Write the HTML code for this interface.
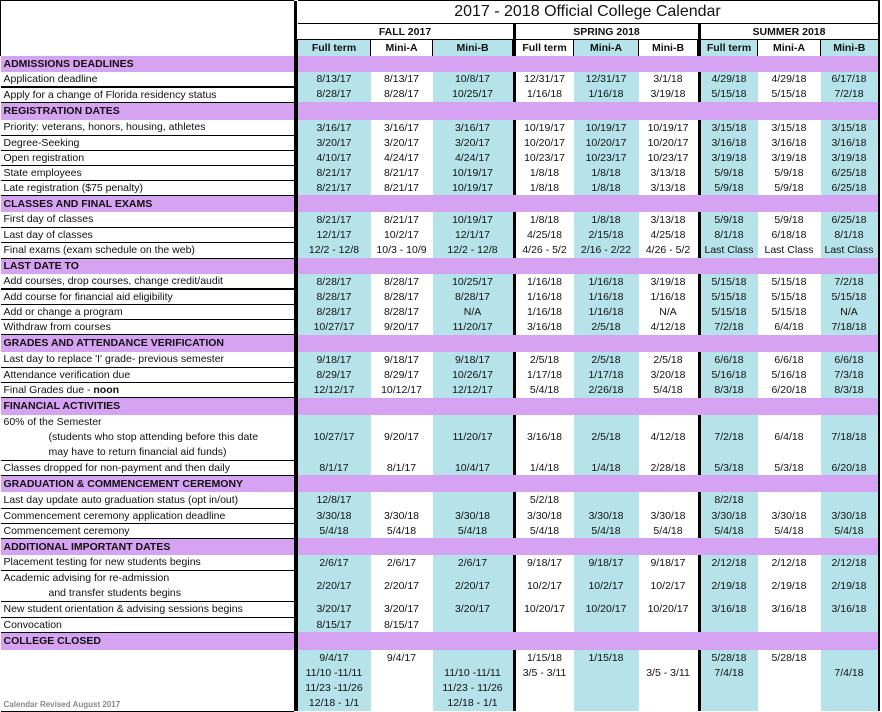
<!DOCTYPE html>
<html><head><meta charset="utf-8"><style>
body{margin:0;background:#fff;width:882px;height:707px;overflow:hidden}
table{border-collapse:collapse;table-layout:fixed;font-family:"Liberation Sans",sans-serif;font-size:10.5px;color:#111;border-right:2px solid #000}
td{padding:0;text-align:center;white-space:nowrap;overflow:hidden;line-height:14px}
.l{text-align:left;padding-left:3px;border-bottom:1px solid #000}
.d{background:#000}
.p{background:#d6a2f2;font-weight:bold;border-bottom:none}
.b{background:#b6e2ea}
.h td{font-weight:bold}
.sub td{border-left:1px solid #000;border-top:1px solid #000;font-weight:bold}
.ind{padding-left:45px}
</style></head><body>
<table>
<colgroup><col style="width:293px"><col style="width:4px"><col style="width:73px"><col style="width:62px"><col style="width:80px"><col style="width:3px"><col style="width:58px"><col style="width:65px"><col style="width:59px"><col style="width:3px"><col style="width:57px"><col style="width:63px"><col style="width:58px"></colgroup>
<tr style="height:23px"><td rowspan="3" style="border-top:1px solid #000;border-left:1px solid #000"></td><td rowspan="3" class="d"></td><td colspan="11" style="font-size:16px;border-top:1px solid #000;border-bottom:1px solid #000;line-height:20px">2017 - 2018 Official College Calendar</td></tr>
<tr class="h" style="height:16px"><td colspan="3">FALL 2017</td><td class="d"></td><td colspan="3">SPRING 2018</td><td class="d"></td><td colspan="3">SUMMER 2018</td></tr>
<tr class="sub" style="height:16px"><td class="b">Full term</td><td>Mini-A</td><td class="b">Mini-B</td><td class="d"></td><td>Full term</td><td class="b">Mini-A</td><td>Mini-B</td><td class="d"></td><td class="b">Full term</td><td>Mini-A</td><td class="b">Mini-B</td></tr>

<tr style="height:16px"><td class="l p">ADMISSIONS DEADLINES</td><td class="d"></td><td colspan="11" class="p"></td></tr>
<tr style="height:15px"><td class="l" style="border-bottom:2px solid #000">Application deadline</td><td class="d"></td><td class="b">8/13/17</td><td>8/13/17</td><td class="b">10/8/17</td><td class="d"></td><td>12/31/17</td><td class="b">12/31/17</td><td>3/1/18</td><td class="d"></td><td class="b">4/29/18</td><td>4/29/18</td><td class="b">6/17/18</td></tr>
<tr style="height:15px"><td class="l">Apply for a change of Florida residency status</td><td class="d"></td><td class="b">8/28/17</td><td>8/28/17</td><td class="b">10/25/17</td><td class="d"></td><td>1/16/18</td><td class="b">1/16/18</td><td>3/19/18</td><td class="d"></td><td class="b">5/15/18</td><td>5/15/18</td><td class="b">7/2/18</td></tr>

<tr style="height:18px"><td class="l p">REGISTRATION DATES</td><td class="d"></td><td colspan="11" class="p"></td></tr>
<tr style="height:15px"><td class="l">Priority: veterans, honors, housing, athletes</td><td class="d"></td><td class="b">3/16/17</td><td>3/16/17</td><td class="b">3/16/17</td><td class="d"></td><td>10/19/17</td><td class="b">10/19/17</td><td>10/19/17</td><td class="d"></td><td class="b">3/15/18</td><td>3/15/18</td><td class="b">3/15/18</td></tr>
<tr style="height:15px"><td class="l">Degree-Seeking</td><td class="d"></td><td class="b">3/20/17</td><td>3/20/17</td><td class="b">3/20/17</td><td class="d"></td><td>10/20/17</td><td class="b">10/20/17</td><td>10/20/17</td><td class="d"></td><td class="b">3/16/18</td><td>3/16/18</td><td class="b">3/16/18</td></tr>
<tr style="height:15px"><td class="l">Open registration</td><td class="d"></td><td class="b">4/10/17</td><td>4/24/17</td><td class="b">4/24/17</td><td class="d"></td><td>10/23/17</td><td class="b">10/23/17</td><td>10/23/17</td><td class="d"></td><td class="b">3/19/18</td><td>3/19/18</td><td class="b">3/19/18</td></tr>
<tr style="height:15px"><td class="l">State employees</td><td class="d"></td><td class="b">8/21/17</td><td>8/21/17</td><td class="b">10/19/17</td><td class="d"></td><td>1/8/18</td><td class="b">1/8/18</td><td>3/13/18</td><td class="d"></td><td class="b">5/9/18</td><td>5/9/18</td><td class="b">6/25/18</td></tr>
<tr style="height:15px"><td class="l">Late registration ($75 penalty)</td><td class="d"></td><td class="b">8/21/17</td><td>8/21/17</td><td class="b">10/19/17</td><td class="d"></td><td>1/8/18</td><td class="b">1/8/18</td><td>3/13/18</td><td class="d"></td><td class="b">5/9/18</td><td>5/9/18</td><td class="b">6/25/18</td></tr>

<tr style="height:17px"><td class="l p">CLASSES AND FINAL EXAMS</td><td class="d"></td><td colspan="11" class="p"></td></tr>
<tr style="height:15px"><td class="l">First day of classes</td><td class="d"></td><td class="b">8/21/17</td><td>8/21/17</td><td class="b">10/19/17</td><td class="d"></td><td>1/8/18</td><td class="b">1/8/18</td><td>3/13/18</td><td class="d"></td><td class="b">5/9/18</td><td>5/9/18</td><td class="b">6/25/18</td></tr>
<tr style="height:15px"><td class="l">Last day of classes</td><td class="d"></td><td class="b">12/1/17</td><td>10/2/17</td><td class="b">12/1/17</td><td class="d"></td><td>4/25/18</td><td class="b">2/15/18</td><td>4/25/18</td><td class="d"></td><td class="b">8/1/18</td><td>6/18/18</td><td class="b">8/1/18</td></tr>
<tr style="height:16px"><td class="l">Final exams (exam schedule on the web)</td><td class="d"></td><td class="b">12/2 - 12/8</td><td>10/3 - 10/9</td><td class="b">12/2 - 12/8</td><td class="d"></td><td>4/26 - 5/2</td><td class="b">2/16 - 2/22</td><td>4/26 - 5/2</td><td class="d"></td><td class="b">Last Class</td><td>Last Class</td><td class="b">Last Class</td></tr>

<tr style="height:16px"><td class="l p">LAST DATE TO</td><td class="d"></td><td colspan="11" class="p"></td></tr>
<tr style="height:15px"><td class="l" style="border-bottom:2px solid #000">Add courses, drop courses, change credit/audit</td><td class="d"></td><td class="b">8/28/17</td><td>8/28/17</td><td class="b">10/25/17</td><td class="d"></td><td>1/16/18</td><td class="b">1/16/18</td><td>3/19/18</td><td class="d"></td><td class="b">5/15/18</td><td>5/15/18</td><td class="b">7/2/18</td></tr>
<tr style="height:15px"><td class="l">Add course for financial aid eligibility</td><td class="d"></td><td class="b">8/28/17</td><td>8/28/17</td><td class="b">8/28/17</td><td class="d"></td><td>1/16/18</td><td class="b">1/16/18</td><td>1/16/18</td><td class="d"></td><td class="b">5/15/18</td><td>5/15/18</td><td class="b">5/15/18</td></tr>
<tr style="height:15px"><td class="l">Add or change a program</td><td class="d"></td><td class="b">8/28/17</td><td>8/28/17</td><td class="b">N/A</td><td class="d"></td><td>1/16/18</td><td class="b">1/16/18</td><td>N/A</td><td class="d"></td><td class="b">5/15/18</td><td>5/15/18</td><td class="b">N/A</td></tr>
<tr style="height:15px"><td class="l">Withdraw from courses</td><td class="d"></td><td class="b">10/27/17</td><td>9/20/17</td><td class="b">11/20/17</td><td class="d"></td><td>3/16/18</td><td class="b">2/5/18</td><td>4/12/18</td><td class="d"></td><td class="b">7/2/18</td><td>6/4/18</td><td class="b">7/18/18</td></tr>

<tr style="height:17px"><td class="l p">GRADES AND ATTENDANCE VERIFICATION</td><td class="d"></td><td colspan="11" class="p"></td></tr>
<tr style="height:16px"><td class="l">Last day to replace 'I' grade- previous semester</td><td class="d"></td><td class="b">9/18/17</td><td>9/18/17</td><td class="b">9/18/17</td><td class="d"></td><td>2/5/18</td><td class="b">2/5/18</td><td>2/5/18</td><td class="d"></td><td class="b">6/6/18</td><td>6/6/18</td><td class="b">6/6/18</td></tr>
<tr style="height:15px"><td class="l">Attendance verification due</td><td class="d"></td><td class="b">8/29/17</td><td>8/29/17</td><td class="b">10/26/17</td><td class="d"></td><td>1/17/18</td><td class="b">1/17/18</td><td>3/20/18</td><td class="d"></td><td class="b">5/16/18</td><td>5/16/18</td><td class="b">7/3/18</td></tr>
<tr style="height:15px"><td class="l">Final Grades due - <b>noon</b></td><td class="d"></td><td class="b">12/12/17</td><td>10/12/17</td><td class="b">12/12/17</td><td class="d"></td><td>5/4/18</td><td class="b">2/26/18</td><td>5/4/18</td><td class="d"></td><td class="b">8/3/18</td><td>6/20/18</td><td class="b">8/3/18</td></tr>

<tr style="height:17px"><td class="l p">FINANCIAL ACTIVITIES</td><td class="d"></td><td colspan="11" class="p"></td></tr>
<tr style="height:45px"><td class="l" style="line-height:15px">60% of the Semester<br><span class="ind">(students who stop attending before this date</span><br><span class="ind">may have to return financial aid funds)</span></td><td class="d"></td><td class="b">10/27/17</td><td>9/20/17</td><td class="b">11/20/17</td><td class="d"></td><td>3/16/18</td><td class="b">2/5/18</td><td>4/12/18</td><td class="d"></td><td class="b">7/2/18</td><td>6/4/18</td><td class="b">7/18/18</td></tr>
<tr style="height:15px"><td class="l">Classes dropped for non-payment and then daily</td><td class="d"></td><td class="b">8/1/17</td><td>8/1/17</td><td class="b">10/4/17</td><td class="d"></td><td>1/4/18</td><td class="b">1/4/18</td><td>2/28/18</td><td class="d"></td><td class="b">5/3/18</td><td>5/3/18</td><td class="b">6/20/18</td></tr>

<tr style="height:17px"><td class="l p">GRADUATION &amp; COMMENCEMENT CEREMONY</td><td class="d"></td><td colspan="11" class="p"></td></tr>
<tr style="height:16px"><td class="l">Last day update auto graduation status (opt in/out)</td><td class="d"></td><td class="b">12/8/17</td><td></td><td class="b"></td><td class="d"></td><td>5/2/18</td><td class="b"></td><td></td><td class="d"></td><td class="b">8/2/18</td><td></td><td class="b"></td></tr>
<tr style="height:15px"><td class="l">Commencement ceremony application deadline</td><td class="d"></td><td class="b">3/30/18</td><td>3/30/18</td><td class="b">3/30/18</td><td class="d"></td><td>3/30/18</td><td class="b">3/30/18</td><td>3/30/18</td><td class="d"></td><td class="b">3/30/18</td><td>3/30/18</td><td class="b">3/30/18</td></tr>
<tr style="height:15px"><td class="l">Commencement ceremony</td><td class="d"></td><td class="b">5/4/18</td><td>5/4/18</td><td class="b">5/4/18</td><td class="d"></td><td>5/4/18</td><td class="b">5/4/18</td><td>5/4/18</td><td class="d"></td><td class="b">5/4/18</td><td>5/4/18</td><td class="b">5/4/18</td></tr>

<tr style="height:17px"><td class="l p">ADDITIONAL IMPORTANT DATES</td><td class="d"></td><td colspan="11" class="p"></td></tr>
<tr style="height:15px"><td class="l">Placement testing for new students begins</td><td class="d"></td><td class="b">2/6/17</td><td>2/6/17</td><td class="b">2/6/17</td><td class="d"></td><td>9/18/17</td><td class="b">9/18/17</td><td>9/18/17</td><td class="d"></td><td class="b">2/12/18</td><td>2/12/18</td><td class="b">2/12/18</td></tr>
<tr style="height:29px"><td class="l" style="line-height:15px">Academic advising for re-admission<br><span class="ind">and transfer students begins</span></td><td class="d"></td><td class="b">2/20/17</td><td>2/20/17</td><td class="b">2/20/17</td><td class="d"></td><td>10/2/17</td><td class="b">10/2/17</td><td>10/2/17</td><td class="d"></td><td class="b">2/19/18</td><td>2/19/18</td><td class="b">2/19/18</td></tr>
<tr style="height:16px"><td class="l">New student orientation &amp; advising sessions begins</td><td class="d"></td><td class="b">3/20/17</td><td>3/20/17</td><td class="b">3/20/17</td><td class="d"></td><td>10/20/17</td><td class="b">10/20/17</td><td>10/20/17</td><td class="d"></td><td class="b">3/16/18</td><td>3/16/18</td><td class="b">3/16/18</td></tr>
<tr style="height:15px"><td class="l">Convocation</td><td class="d"></td><td class="b">8/15/17</td><td>8/15/17</td><td class="b"></td><td class="d"></td><td></td><td class="b"></td><td></td><td class="d"></td><td class="b"></td><td></td><td class="b"></td></tr>

<tr style="height:18px"><td class="l p">COLLEGE CLOSED</td><td class="d"></td><td colspan="11" class="p"></td></tr>
<tr style="height:56px;vertical-align:top"><td class="l" style="vertical-align:bottom;font-size:8px;font-weight:bold;color:#888;line-height:13px">Calendar Revised August 2017</td><td class="d"></td><td class="b" style="line-height:15px;padding-top:1px">9/4/17<br>11/10 -11/11<br>11/23 -11/26<br>12/18 - 1/1</td><td style="line-height:15px;padding-top:1px">9/4/17</td><td class="b" style="line-height:15px;padding-top:1px">&nbsp;<br>11/10 -11/11<br>11/23 - 11/26<br>12/18 - 1/1</td><td class="d"></td><td style="line-height:15px;padding-top:1px">1/15/18<br>3/5 - 3/11</td><td class="b" style="line-height:15px;padding-top:1px">1/15/18</td><td style="line-height:15px;padding-top:1px">&nbsp;<br>3/5 - 3/11</td><td class="d"></td><td class="b" style="line-height:15px;padding-top:1px">5/28/18<br>7/4/18</td><td style="line-height:15px;padding-top:1px">5/28/18</td><td class="b" style="line-height:15px;padding-top:1px">&nbsp;<br>7/4/18</td></tr>
</table>
</body></html>
